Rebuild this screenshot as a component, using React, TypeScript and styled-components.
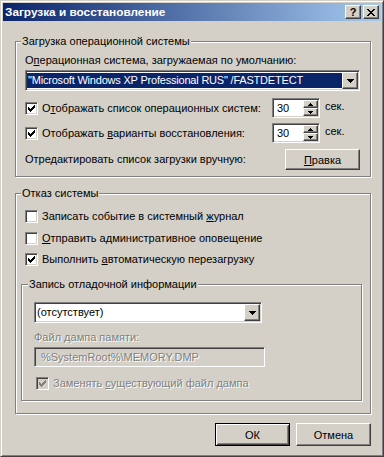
import styled, { createGlobalStyle, css } from 'styled-components';

const FACE = '#d4d0c8';
const SHADOW = '#808080';
const DARK = '#404040';
const HILITE = '#ffffff';
const SELECT = '#0a246a';

const GlobalStyle = createGlobalStyle`
  html, body {
    margin: 0;
    padding: 0;
  }
  body {
    background: ${FACE};
    font-family: "Liberation Sans", Arial, sans-serif;
    font-size: 11px;
    color: #000;
  }
  *, *::before, *::after {
    box-sizing: border-box;
  }
`;

const raised = css`
  border: 1px solid;
  border-color: ${HILITE} ${DARK} ${DARK} ${HILITE};
  box-shadow: inset -1px -1px ${SHADOW}, inset 1px 1px ${FACE};
  background: ${FACE};
`;

const sunken = css`
  border: 1px solid;
  border-color: ${SHADOW} ${HILITE} ${HILITE} ${SHADOW};
  box-shadow: inset 1px 1px ${DARK}, inset -1px -1px ${FACE};
`;

const disabledText = css`
  color: ${SHADOW};
  text-shadow: 1px 1px ${HILITE};
`;

const Window = styled.div`
  width: 384px;
  height: 457px;
  padding: 2px;
  background: ${FACE};
  border: 1px solid;
  border-color: ${FACE} ${DARK} ${DARK} ${FACE};
  box-shadow: inset 1px 1px ${HILITE}, inset -1px -1px ${SHADOW};
  display: flex;
  flex-direction: column;
`;

const TitleBar = styled.div`
  height: 18px;
  display: flex;
  align-items: center;
  padding: 0 2px;
  background: linear-gradient(to right, ${SELECT}, #a6caf0);
  color: #fff;
`;

const Title = styled.span`
  flex: 1;
  font-weight: bold;
  font-size: 11.8px;
  line-height: 14px;
`;

const CaptionButtons = styled.div`
  display: flex;
  gap: 2px;
`;

const CaptionButton = styled.button`
  ${raised};
  width: 16px;
  height: 14px;
  padding: 0;
  display: flex;
  align-items: center;
  justify-content: center;
  font-family: "Liberation Sans", Arial, sans-serif;
  font-weight: bold;
  font-size: 11px;
  line-height: 1;
  color: #000;
`;

const Body = styled.div`
  flex: 1;
  display: flex;
  flex-direction: column;
  padding: 14px 10px 0 12px;
`;

const Group = styled.fieldset<{ $gap?: number }>`
  margin: ${({ $gap }) => $gap ?? 0}px 0 0 0;
  padding: 0;
  min-width: 0;
  border: 1px solid ${SHADOW};
  box-shadow: inset 1px 1px ${HILITE}, 1px 1px ${HILITE};
`;

const Caption = styled.legend<{ $indent: number }>`
  margin-left: ${({ $indent }) => $indent}px;
  padding: 0 1px;
  line-height: 13px;
  background: ${FACE};
`;

const GroupBody = styled.div<{ $pad: string }>`
  display: flex;
  flex-direction: column;
  padding: ${({ $pad }) => $pad};
`;

const Label = styled.div<{ $disabled?: boolean; $mt?: number }>`
  line-height: 13px;
  margin-top: ${({ $mt }) => $mt ?? 0}px;
  ${({ $disabled }) => $disabled && disabledText};
`;

const Combo = styled.div<{ $width?: number; $mt?: number }>`
  ${sunken};
  width: ${({ $width }) => ($width ? `${$width}px` : 'auto')};
  height: 21px;
  margin-top: ${({ $mt }) => $mt ?? 0}px;
  padding: 1px;
  background: #fff;
  display: flex;
`;

const ComboText = styled.div<{ $selected?: boolean }>`
  flex: 1;
  margin: 1px 0 1px 0;
  padding-left: 1px;
  line-height: 15px;
  white-space: nowrap;
  overflow: hidden;
  letter-spacing: ${({ $selected }) => ($selected ? '-0.2px' : '0')};
  background: ${({ $selected }) => ($selected ? SELECT : 'transparent')};
  color: ${({ $selected }) => ($selected ? '#fff' : '#000')};
`;

const ArrowButton = styled.div<{ $w: number; $h: number }>`
  ${raised};
  width: ${({ $w }) => $w}px;
  height: ${({ $h }) => $h}px;
  flex: none;
  display: flex;
  align-items: center;
  justify-content: center;
`;

const SpinRow = styled.div<{ $mt: number }>`
  display: grid;
  grid-template-columns: 247px 48px auto;
  align-items: center;
  height: 20px;
  margin-top: ${({ $mt }) => $mt}px;
`;

const Unit = styled.span`
  margin-left: 5px;
  line-height: 13px;
  padding-bottom: 3px;
`;

const Spin = styled.div`
  ${sunken};
  width: 48px;
  height: 20px;
  padding: 1px;
  background: #fff;
  display: flex;
`;

const SpinValue = styled.div`
  flex: 1;
  padding-left: 3px;
  line-height: 16px;
`;

const SpinButtons = styled.div`
  display: flex;
  flex-direction: column;
`;

const CheckRow = styled.label<{ $disabled?: boolean; $indent?: number; $mt?: number }>`
  display: flex;
  align-items: center;
  gap: 4px;
  height: 13px;
  line-height: 13px;
  margin-left: ${({ $indent }) => $indent ?? 0}px;
  margin-top: ${({ $mt }) => $mt ?? 0}px;
  white-space: nowrap;
  ${({ $disabled }) => $disabled && disabledText};
`;

const Box = styled.span<{ $disabled?: boolean }>`
  ${sunken};
  width: 13px;
  height: 13px;
  flex: none;
  display: inline-flex;
  align-items: center;
  justify-content: center;
  background: ${({ $disabled }) => ($disabled ? FACE : '#fff')};
  text-shadow: none;
`;

const EditRow = styled.div`
  display: flex;
  align-items: center;
  justify-content: space-between;
  margin-top: 6px;
`;

const PushButton = styled.button<{ $default?: boolean; $h?: number }>`
  ${raised};
  width: 75px;
  height: ${({ $h }) => $h ?? 23}px;
  padding: 0;
  font-family: "Liberation Sans", Arial, sans-serif;
  font-size: 11px;
  color: #000;
  ${({ $default }) =>
    $default &&
    css`
      border-color: #000;
      box-shadow: inset 1px 1px ${HILITE}, inset -1px -1px ${DARK}, inset 2px 2px ${FACE},
        inset -2px -2px ${SHADOW};
    `};
`;

const TextField = styled.div<{ $width: number }>`
  ${sunken};
  ${disabledText};
  width: ${({ $width }) => $width}px;
  height: 20px;
  margin-top: 3px;
  padding: 0 0 0 6px;
  line-height: 18px;
  background: ${FACE};
`;

const Footer = styled.div`
  display: flex;
  justify-content: flex-end;
  gap: 6px;
  margin-top: 9px;
`;

function Pixels({ w, h, d, color = '#000' }: { w: number; h: number; d: string; color?: string }) {
  return (
    <svg width={w} height={h} viewBox={`0 0 ${w} ${h}`} shapeRendering="crispEdges">
      <path fill={color} d={d} />
    </svg>
  );
}

const CHECK =
  'M6 0h1v1h-1z M5 1h2v1h-2z M0 2h1v1h-1z M4 2h3v1h-3z M0 3h2v1h-2z M3 3h3v1h-3z M0 4h5v1h-5z M1 5h3v1h-3z M2 6h1v1h-1z';
const DOWN = 'M0 0h7v1h-7z M1 1h5v1h-5z M2 2h3v1h-3z M3 3h1v1h-1z';
const SMALL_UP = 'M2 0h1v1h-1z M1 1h3v1h-3z M0 2h5v1h-5z';
const SMALL_DOWN = 'M0 0h5v1h-5z M1 1h3v1h-3z M2 2h1v1h-1z';
const CLOSE =
  'M0 0h2v1h-2z M6 0h2v1h-2z M1 1h2v1h-2z M5 1h2v1h-2z M2 2h4v1h-4z M3 3h2v1h-2z M2 4h4v1h-4z M1 5h2v1h-2z M5 5h2v1h-2z M0 6h2v1h-2z M6 6h2v1h-2z';

function CheckBox({
  checked,
  disabled,
  indent,
  mt,
  children,
}: {
  checked?: boolean;
  disabled?: boolean;
  indent?: number;
  mt?: number;
  children: React.ReactNode;
}) {
  return (
    <CheckRow $disabled={disabled} $indent={indent} $mt={mt}>
      <Box $disabled={disabled}>{checked && <Pixels w={7} h={7} d={CHECK} color={disabled ? SHADOW : '#000'} />}</Box>
      <span>{children}</span>
    </CheckRow>
  );
}

function SpinBox({ value }: { value: string }) {
  return (
    <Spin>
      <SpinValue>{value}</SpinValue>
      <SpinButtons>
        <ArrowButton $w={15} $h={8}>
          <Pixels w={5} h={3} d={SMALL_UP} />
        </ArrowButton>
        <ArrowButton $w={15} $h={8}>
          <Pixels w={5} h={3} d={SMALL_DOWN} />
        </ArrowButton>
      </SpinButtons>
    </Spin>
  );
}

function DropDown({ text, selected, width, mt }: { text: string; selected?: boolean; width?: number; mt?: number }) {
  return (
    <Combo $width={width} $mt={mt}>
      <ComboText $selected={selected}>{text}</ComboText>
      <ArrowButton $w={16} $h={17}>
        <Pixels w={7} h={4} d={DOWN} />
      </ArrowButton>
    </Combo>
  );
}

export default function App() {
  return (
    <>
      <GlobalStyle />
      <Window>
        <TitleBar>
          <Title>Загрузка и восстановление</Title>
          <CaptionButtons>
            <CaptionButton type="button">?</CaptionButton>
            <CaptionButton type="button">
              <Pixels w={8} h={7} d={CLOSE} />
            </CaptionButton>
          </CaptionButtons>
        </TitleBar>

        <Body>
          <Group>
            <Caption $indent={5}>Загрузка операционной системы</Caption>
            <GroupBody $pad="6px 10px 6px 9px">
              <Label>
                О<u>п</u>ерационная система, загружаемая по умолчанию:
              </Label>
              <DropDown mt={3} selected text={'"Microsoft Windows XP Professional RUS" /FASTDETECT'} />
              <SpinRow $mt={7}>
                <CheckBox checked>
                  О<u>т</u>ображать список операционных систем:
                </CheckBox>
                <SpinBox value="30" />
                <Unit>сек.</Unit>
              </SpinRow>
              <SpinRow $mt={5}>
                <CheckBox checked>
                  Отображать <u>в</u>арианты восстановления:
                </CheckBox>
                <SpinBox value="30" />
                <Unit>сек.</Unit>
              </SpinRow>
              <EditRow>
                <Label>Отредактировать список загрузки вручную:</Label>
                <PushButton type="button" $h={21}>
                  <u>П</u>равка
                </PushButton>
              </EditRow>
            </GroupBody>
          </Group>

          <Group $gap={10}>
            <Caption $indent={5}>Отказ системы</Caption>
            <GroupBody $pad="10px 8px 12px 5px">
              <CheckBox indent={4}>
                Записать событие в системный <u>ж</u>урнал
              </CheckBox>
              <CheckBox indent={4} mt={9}>
                <u>О</u>тправить административное оповещение
              </CheckBox>
              <CheckBox indent={4} mt={8} checked>
                Выполнить <u>а</u>втоматическую перезагрузку
              </CheckBox>

              <Group $gap={12}>
                <Caption $indent={6}>Запись отладочной информации</Caption>
                <GroupBody $pad="11px 0 10px 12px">
                  <DropDown width={228} text="(отсутствует)" />
                  <Label $disabled $mt={8}>
                    Файл дампа памяти:
                  </Label>
                  <TextField $width={231}>%SystemRoot%\MEMORY.DMP</TextField>
                  <CheckBox disabled checked indent={2} mt={10}>
                    Заменять <u>с</u>уществующий файл дампа
                  </CheckBox>
                </GroupBody>
              </Group>
            </GroupBody>
          </Group>

          <Footer>
            <PushButton type="button" $default>
              ОК
            </PushButton>
            <PushButton type="button">Отмена</PushButton>
          </Footer>
        </Body>
      </Window>
    </>
  );
}
